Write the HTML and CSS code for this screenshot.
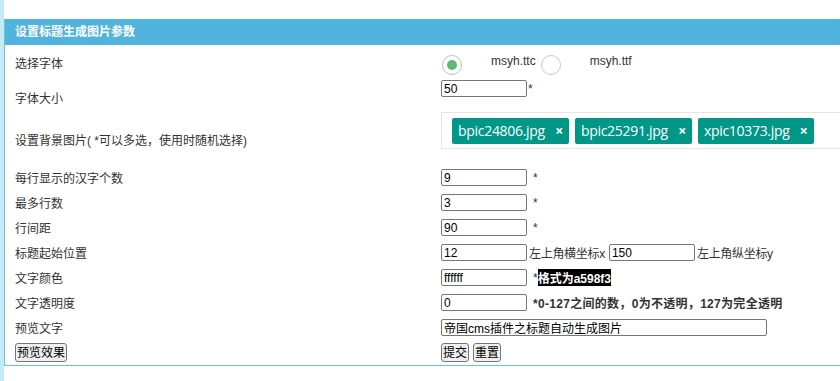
FILE: index.html
```html
<!DOCTYPE html>
<html lang="zh-CN">
<head>
    <meta charset="UTF-8">
    <title>设置标题生成图片参数</title>
    <link rel="stylesheet" href="styles.css">
</head>
<body>
    <div class="page">
        <div class="panel">
            <div class="panel-head">设置标题生成图片参数</div>
            <form class="form">
                <div class="row row-font">
                    <div class="label">选择字体</div>
                    <div class="value radios">
                        <label class="radio"><input type="radio" name="font" checked><span>msyh.ttc</span></label>
                        <label class="radio"><input type="radio" name="font"><span>msyh.ttf</span></label>
                    </div>
                </div>
                <div class="row row-size">
                    <div class="label">字体大小</div>
                    <div class="value top"><input type="text" class="txt" value="50"><span class="star-tight">*</span></div>
                </div>
                <div class="row row-bg">
                    <div class="label">设置背景图片( *可以多选，使用时随机选择)</div>
                    <div class="value top">
                        <div class="tags">
                            <span class="tag">bpic24806.jpg <b>×</b></span>
                            <span class="tag">bpic25291.jpg <b>×</b></span>
                            <span class="tag">xpic10373.jpg <b>×</b></span>
                        </div>
                    </div>
                </div>
                <div class="row">
                    <div class="label">每行显示的汉字个数</div>
                    <div class="value"><input type="text" class="txt" value="9"><span class="star">*</span></div>
                </div>
                <div class="row">
                    <div class="label">最多行数</div>
                    <div class="value"><input type="text" class="txt" value="3"><span class="star">*</span></div>
                </div>
                <div class="row">
                    <div class="label">行间距</div>
                    <div class="value"><input type="text" class="txt" value="90"><span class="star">*</span></div>
                </div>
                <div class="row">
                    <div class="label">标题起始位置</div>
                    <div class="value"><input type="text" class="txt" value="12"><span class="note">左上角横坐标x</span><input type="text" class="txt" value="150"><span class="note">左上角纵坐标y</span></div>
                </div>
                <div class="row">
                    <div class="label">文字颜色</div>
                    <div class="value"><input type="text" class="txt" value="ffffff"><span class="star">*</span><b class="hint-dark">格式为a598f3</b></div>
                </div>
                <div class="row">
                    <div class="label">文字透明度</div>
                    <div class="value"><input type="text" class="txt" value="0"><b class="hint">*0-127之间的数，0为不透明，127为完全透明</b></div>
                </div>
                <div class="row">
                    <div class="label">预览文字</div>
                    <div class="value"><input type="text" class="txt wide" value="帝国cms插件之标题自动生成图片"></div>
                </div>
                <div class="row">
                    <div class="label"><button type="button" class="btn">预览效果</button></div>
                    <div class="value"><button type="submit" class="btn">提交</button><button type="reset" class="btn">重置</button></div>
                </div>
            </form>
        </div>
    </div>
</body>
</html>
```

FILE: styles.css
```css
body {
    margin: 0;
    font-family: "Liberation Sans", "Noto Sans CJK SC", sans-serif;
    font-size: 12px;
    color: #333;
    background: #fff;
}
.page {
    min-height: 381px;
    border-left: 4px solid #c6ebf8;
    padding-top: 19px;
    box-sizing: border-box;
}
.panel {
    border-left: 1px solid #6cc3d6;
    border-bottom: 1px solid #6cc3d0;
    overflow: hidden;
}
.panel-head {
    height: 26px;
    line-height: 26px;
    padding-left: 10px;
    background-color: #51b4de;
    color: #fff;
    font-weight: bold;
}
.row {
    display: grid;
    grid-template-columns: 426px 1fr;
    height: 25px;
    padding-left: 10px;
}
.row-font { height: 34px; }
.row-size { height: 34px; }
.row-bg { height: 52px; }
.label {
    align-self: center;
    white-space: nowrap;
}
.row-size .label { padding-top: 2px; }
.value {
    display: flex;
    align-items: center;
    white-space: nowrap;
}
.value.top {
    align-items: flex-start;
    padding-top: 1px;
}
.row-bg .value.top { padding-top: 0; margin-top: -1px; }
.radios {
    align-items: flex-start;
    padding-top: 10px;
}
.radio {
    display: flex;
    align-items: flex-start;
}
.radio input {
    appearance: none;
    margin: 0 0 0 1px;
    width: 20px;
    height: 20px;
    border: 1px solid #c9c9c9;
    border-radius: 50%;
    box-sizing: border-box;
    position: relative;
}
.radio input:checked {
    border-color: #b0c9b6;
}
.radio input:checked::after {
    content: "";
    position: absolute;
    left: 4px;
    top: 4px;
    width: 10px;
    height: 10px;
    border-radius: 50%;
    background: #5fb878;
}
.radio span {
    margin: 0 4px 0 29px;
    line-height: 13px;
}
.radio + .radio span { margin-left: 29px; }
.txt {
    width: 86px;
    height: 17px;
    box-sizing: border-box;
    margin: 0;
    padding: 0 2px;
    border: 1px solid #767676;
    border-radius: 2px;
    font-family: "Liberation Sans", "Noto Sans CJK SC", sans-serif;
    font-size: 12px;
    color: #000;
}
.txt.wide { width: 326px; }
.star { margin-left: 6px; }
.star-tight { margin-left: 1px; line-height: 12px; padding-top: 3px; }
.note { margin: 0 4px 0 2px; letter-spacing: -0.3px; }
.hint-dark {
    background: #000;
    color: #fff;
}
.hint { margin-left: 6px; letter-spacing: 0.3px; }
.tags {
    width: 420px;
    height: 37px;
    box-sizing: border-box;
    border: 1px solid #e6e6e6;
    padding: 5px 0 0 10px;
    display: flex;
    gap: 6px;
}
.tag {
    height: 26px;
    line-height: 26px;
    padding: 0 6px;
    background-color: #009688;
    color: #fff;
    font-size: 14px;
    border-radius: 2px;
    font-family: "Open Sans", "Liberation Sans", sans-serif;
    letter-spacing: -0.3px;
}
.tag b { margin-left: 7px; font-size: 14px; }
.btn {
    height: 19px;
    margin: 0 4px 0 0;
    padding: 0 1px;
    border: 1px solid #767676;
    border-radius: 3px;
    background: #efefef;
    font-family: "Liberation Sans", "Noto Sans CJK SC", sans-serif;
    font-size: 12px;
    line-height: 16px;
    color: #000;
}
```
